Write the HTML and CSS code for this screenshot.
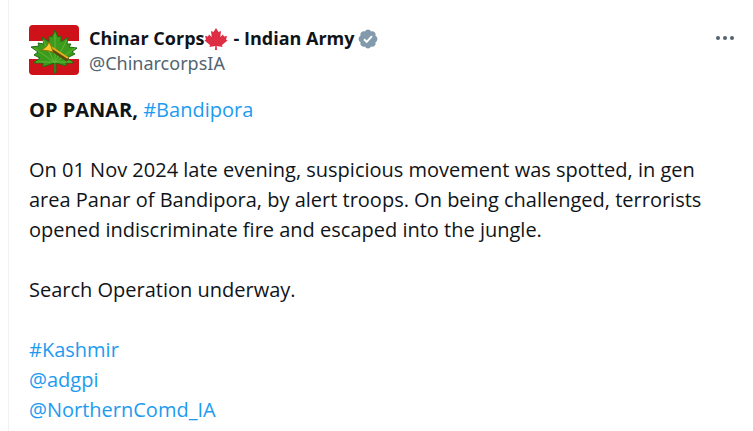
FILE: index.html
```html
<!DOCTYPE html>
<html lang="en">
<head>
    <meta charset="UTF-8">
    <meta name="viewport" content="width=device-width, initial-scale=1">
    <title>Chinar Corps - Indian Army</title>
    <link rel="stylesheet" href="styles.css">
</head>
<body>
    <article class="tweet">
        <header class="tweet-header">
            <a class="avatar" href="#" aria-label="Chinar Corps">
                <svg viewBox="0 0 50 50">
                    <rect width="50" height="50" fill="#fff"/>
                    <rect width="50" height="16" fill="#cf1219"/>
                    <rect y="34" width="50" height="16" fill="#cf1219"/>
                    <path d="M26 5L29 12L32 11L32 17L39 12L38 19L42 19L40 22L48 23L43 27L46 29L38 33L45 38L37 38L37 41L27 38L27 48L25 48L25 38L14 42L14 38L4 38L11 33L5 30L9 27L2 22L10 21L9 18L15 19L13 12L20 17L20 11L23 12Z" fill="#3c9a1c" stroke="#236b12" stroke-width="1"/>
                    <path d="M26 9V38L14 15M26 37L38 15M25 37L5 23M27 37L46 23M25 37L7 37M27 37L43 37" fill="none" stroke="#5fb934" stroke-width="1"/>
                    <path d="M20 22L39 35" stroke="#5c4a0c" stroke-width="4"/>
                    <path d="M19 20L39 33" stroke="#e8b01d" stroke-width="2"/>
                    <path d="M20 17L22 21L24 27L20 26L13 25L18 21Z" fill="#f6cc2b" stroke="#96700c" stroke-width="1"/>
                </svg>
            </a>
            <div class="author">
                <a class="name" href="#">
                    <span>Chinar Corps</span>
                    <svg class="leaf" viewBox="0 0 24 24" role="img" aria-label="Maple leaf">
                        <path d="M12 1L14.500 5L17 4L16.300 10L19 7.500L20 9.500L23 9L22 12.500L23.500 13.500L18 18L18.500 20L12.700 19L13 23H11L11.300 19L5.500 20L6 18L0.500 13.500L2 12.500L1 9L4 9.500L5 7.500L7.700 10L7 4L9.500 5Z" fill="#dd2e44"/>
                    </svg>
                    <span class="name-rest">- Indian Army</span>
                    <svg class="badge" viewBox="0 0 22 22" role="img" aria-label="Verified">
                        <path d="M20.400 11c0-1.400-.8-2.600-2-3.200.5-1.300.2-2.700-.8-3.600-.9-1-2.300-1.300-3.600-.8C13.500 2.200 12.300 1.400 11 1.400S8.500 2.200 8 3.400c-1.300-.5-2.700-.2-3.600.8-1 .9-1.300 2.300-.8 3.600-1.200.6-2 1.800-2 3.200s.8 2.600 2 3.200c-.5 1.300-.2 2.700.8 3.600.9 1 2.300 1.300 3.600.8.500 1.200 1.700 2 3 2s2.500-.8 3-2c1.300.5 2.700.2 3.600-.8 1-.9 1.300-2.300.8-3.600 1.200-.6 2-1.800 2-3.200z" fill="#829aab"/>
                        <path d="M7 11.200l2.700 2.700 5.300-5.800" fill="none" stroke="#fff" stroke-width="2"/>
                    </svg>
                </a>
                <a class="handle" href="#">@ChinarcorpsIA</a>
            </div>
            <button class="more" type="button" aria-label="More">
                <svg viewBox="0 0 20 20">
                    <circle cx="3" cy="10" r="2"/>
                    <circle cx="10" cy="10" r="2"/>
                    <circle cx="17" cy="10" r="2"/>
                </svg>
            </button>
        </header>
        <div class="tweet-text">
            <p><strong>OP PANAR,</strong> <a href="#">#Bandipora</a></p>
            <p>On 01 Nov 2024 late evening, suspicious movement was spotted, in gen area Panar of Bandipora, by alert troops. On being challenged, terrorists opened indiscriminate fire and escaped into the jungle.</p>
            <p>Search Operation underway.</p>
            <p>
                <a href="#">#Kashmir</a><br>
                <a href="#">@adgpi</a><br>
                <a href="#">@NorthernComd_IA</a>
            </p>
        </div>
    </article>
</body>
</html>
```

FILE: styles.css
```css
body {
    margin: 0;
    padding-left: 8px;
    background-color: #fff;
    color: #0f1419;
    font-family: "Open Sans", "Noto Sans", sans-serif;
}

a {
    color: #1d9bf0;
    text-decoration: none;
}

.tweet {
    min-height: 100vh;
    box-sizing: border-box;
    padding: 25px 16px 6px 20px;
    border-left: 1px solid #eff3f4;
}

.tweet-header {
    display: flex;
    align-items: flex-start;
    gap: 10px;
}

.avatar {
    width: 50px;
    height: 50px;
    border-radius: 4px;
    overflow: hidden;
}

.avatar svg,
.more svg {
    display: block;
}

.author {
    flex: 1;
    padding-top: 1px;
    font-size: 18px;
    line-height: 25px;
}

.name {
    display: flex;
    align-items: center;
    color: #0f1419;
    font-weight: 700;
}

.leaf {
    width: 24px;
    height: 24px;
}

.name-rest {
    margin-left: 5px;
}

.badge {
    width: 22px;
    height: 22px;
    margin-left: 2px;
}

.handle {
    display: block;
    color: #536471;
    font-family: "Noto Sans", sans-serif;
}

.more {
    padding: 3px 2px;
    border: none;
    background: none;
    cursor: pointer;
}

.more svg {
    width: 20px;
    height: 20px;
    fill: #536471;
}

.tweet-text {
    margin-top: 19px;
    font-size: 20px;
    line-height: 30px;
}

.tweet-text p {
    margin: 0 0 30px;
}

.tweet-text p:last-child {
    margin-bottom: 0;
}
```
